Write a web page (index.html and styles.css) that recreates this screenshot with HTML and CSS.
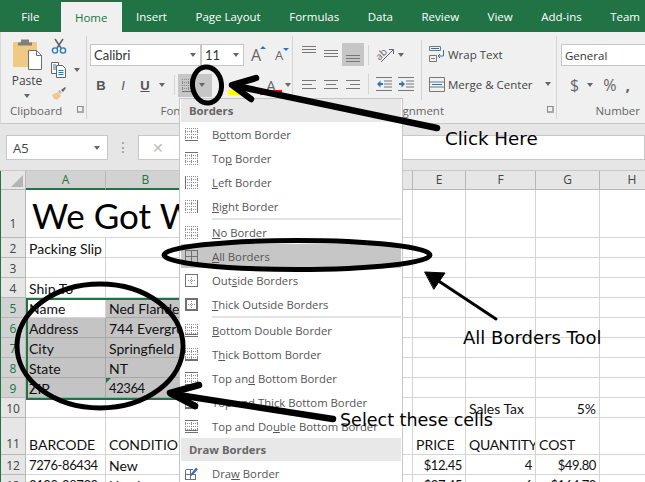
FILE: index.html
```html
<!DOCTYPE html>
<html lang="en">
<head>
    <meta charset="UTF-8">
    <title>Borders menu in Excel</title>
    <link rel="stylesheet" href="styles.css">
</head>
<body>
    <svg class="defs" width="0" height="0">
        <symbol id="dots" viewBox="0 0 13 13">
            <path class="dot" d="M.5 0v13M6.500 0v13M12.500 0v13M0 .5h13M0 3.500h13M0 6.500h13M0 9.500h13M0 12.500h13" />
        </symbol>
        <symbol id="cross" viewBox="0 0 13 13">
            <path class="dot" d="M6.500 3v7M3 6.500h7" />
        </symbol>
    </svg>

    <div class="window">
        <div class="tabs">
            <div class="tab">File</div>
            <div class="tab active">Home</div>
            <div class="tab">Insert</div>
            <div class="tab">Page Layout</div>
            <div class="tab">Formulas</div>
            <div class="tab">Data</div>
            <div class="tab">Review</div>
            <div class="tab">View</div>
            <div class="tab">Add-ins</div>
            <div class="tab">Team</div>
        </div>

        <div class="ribbon">
            <!-- clipboard -->
            <div class="group clipboard">
                <div class="group-body clip-body">
                    <div class="paste">
                        <svg width="30" height="32" viewBox="0 0 30 32">
                            <rect x="1" y="4" width="24" height="25" rx="1" fill="#f0c987" />
                            <path d="M9 1.500h8v3h3v3H6v-3h3z" fill="#7f7f7f" />
                            <path d="M16.500 12.500h8l5 5v14h-13z" fill="#fff" stroke="#6e6e6e" />
                            <path d="M24.500 12.500v5h5" fill="none" stroke="#6e6e6e" />
                        </svg>
                        <span class="paste-label">Paste</span>
                        <span class="caret"></span>
                    </div>
                    <div class="clip-tools">
                        <svg width="16" height="16" viewBox="0 0 16 16">
                            <path d="M4 1l6 9M12 1L6 10" stroke="#666" stroke-width="1.600" fill="none" />
                            <circle cx="4" cy="12.500" r="2.600" fill="none" stroke="#2e75b6" stroke-width="1.400" />
                            <circle cx="12" cy="12.500" r="2.600" fill="none" stroke="#2e75b6" stroke-width="1.400" />
                        </svg>
                        <div class="tool-row">
                            <svg width="16" height="16" viewBox="0 0 16 16">
                                <path d="M.5 .5h7v11h-7z" fill="#fff" stroke="#666" />
                                <path d="M5.500 3.500h6l3 3v9h-9z" fill="#fff" stroke="#666" />
                                <path d="M2 3h3M2 5h3M2 7h3M7.500 8.500h5M7.500 10.500h5M7.500 12.500h5" stroke="#2e75b6" />
                            </svg>
                            <span class="caret"></span>
                        </div>
                        <svg width="16" height="15" viewBox="0 0 16 15">
                            <path d="M1 9l6-3 3 4-4 4-2-1-1 0z" fill="#f0c987" />
                            <path d="M7 5l2-1 2 3-2 1z" fill="#bbb" />
                            <path d="M10 4l4-3 1 1-3 4z" fill="#666" />
                        </svg>
                    </div>
                </div>
                <div class="group-label">Clipboard<span class="launcher"></span></div>
            </div>

            <!-- font -->
            <div class="group font">
                <div class="group-body font-body">
                    <div class="tool-row">
                        <div class="combo font-name">Calibri<span class="caret"></span></div>
                        <div class="combo font-size">11<span class="caret"></span></div>
                        <span class="grow">A<i class="up"></i></span>
                        <span class="grow small">A<i class="down"></i></span>
                    </div>
                    <div class="tool-row second">
                        <span class="btn bold">B</span>
                        <span class="btn ital">I</span>
                        <span class="btn under">U</span>
                        <span class="caret"></span>
                        <span class="vsep"></span>
                        <span class="border-btn">
                            <svg class="bi" viewBox="0 0 13 13"><use href="#dots" /><path d="M0 12.500h13" /></svg>
                            <span class="caret"></span>
                        </span>
                        <span class="vsep"></span>
                        <span class="color-btn fill"></span>
                        <span class="color-btn text">A</span>
                        <span class="caret"></span>
                    </div>
                </div>
                <div class="group-label">Font</div>
            </div>

            <!-- alignment -->
            <div class="group align">
                <div class="group-body align-body">
                    <div class="align-col">
                        <div class="tool-row">
                            <span class="lines top"></span>
                            <span class="lines mid"></span>
                            <span class="lines bot on"></span>
                            <span class="vsep"></span>
                            <svg class="orient" width="20" height="18" viewBox="0 0 20 18">
                                <text x="0" y="12" transform="rotate(-45 5 9)">ab</text>
                                <path d="M5 16L17 4M13 3.500h4.500V8" fill="none" stroke="#666" />
                            </svg>
                            <span class="caret"></span>
                        </div>
                        <div class="tool-row">
                            <span class="lines left"></span>
                            <span class="lines center"></span>
                            <span class="lines right"></span>
                            <span class="vsep"></span>
                            <svg width="16" height="14" viewBox="0 0 16 14">
                                <path d="M0 .5h16M8 4h8M8 7h8M8 10h8M0 13.500h16" stroke="#777" />
                                <path d="M1 7l3.500-3.500V6H7v2H4.500v2.500z" fill="#2e75b6" />
                            </svg>
                            <svg width="16" height="14" viewBox="0 0 16 14">
                                <path d="M0 .5h16M8 4h8M8 7h8M8 10h8M0 13.500h16" stroke="#777" />
                                <path d="M7 7L3.500 3.500V6H1v2h2.500v2.500z" fill="#2e75b6" />
                            </svg>
                        </div>
                    </div>
                    <span class="vsep tall"></span>
                    <div class="merge-col">
                        <div class="tool-row">
                            <svg width="16" height="16" viewBox="0 0 16 16">
                                <path d="M.5 .5h11v4H.5zM.5 9.500h7v6h-7zM2 12.500h4" fill="none" stroke="#777" />
                                <path d="M2 2.500h8" stroke="#2e75b6" />
                                <path d="M14.500 4v6H9M11 8l-2 2 2 2" fill="none" stroke="#2e75b6" />
                            </svg>
                            <span>Wrap Text</span>
                        </div>
                        <div class="tool-row">
                            <svg width="16" height="15" viewBox="0 0 16 15">
                                <path d="M.5.5h15v14H.5zM.5 5h15M.5 10h15" fill="none" stroke="#777" />
                                <path d="M3 7.500h10" stroke="#2e75b6" />
                            </svg>
                            <span>Merge &amp; Center</span>
                            <span class="caret wide"></span>
                        </div>
                    </div>
                </div>
                <div class="group-label">Alignment<span class="launcher"></span></div>
            </div>

            <!-- number -->
            <div class="group number">
                <div class="group-body number-body">
                    <div class="combo general">General</div>
                    <div class="tool-row money">
                        <span class="sym">$</span>
                        <span class="caret"></span>
                        <span class="sym">%</span>
                        <span class="sym comma">,</span>
                    </div>
                </div>
                <div class="group-label">Number</div>
            </div>
        </div>

        <div class="formula-bar">
            <div class="name-box">A5<span class="caret"></span></div>
            <div class="grip"></div>
            <div class="fx-box">✕</div>
            <div class="fx-input"></div>
        </div>

        <div class="sheet">
            <table class="grid">
                <colgroup>
                    <col class="c-head"><col class="c-a"><col class="c-b"><col class="c-c"><col class="c-d"><col class="c-e"><col class="c-f"><col class="c-g"><col class="c-h">
                </colgroup>
                <tr class="r-head">
                    <th class="corner"><span></span></th><th class="hit">A</th><th class="hit">B</th><th>C</th><th>D</th><th>E</th><th>F</th><th>G</th><th>H</th>
                </tr>
                <tr class="r-title">
                    <th>1</th><td class="title" colspan="4">We Got Widgets</td><td></td><td></td><td></td><td></td>
                </tr>
                <tr><th>2</th><td>Packing Slip</td><td></td><td></td><td></td><td></td><td></td><td></td><td></td></tr>
                <tr><th>3</th><td></td><td></td><td></td><td></td><td></td><td></td><td></td><td></td></tr>
                <tr><th>4</th><td>Ship To</td><td></td><td></td><td></td><td></td><td></td><td></td><td></td></tr>
                <tr><th class="hit">5</th><td>Name</td><td class="sel">Ned Flanders</td><td></td><td></td><td></td><td></td><td></td><td></td></tr>
                <tr><th class="hit">6</th><td class="sel">Address</td><td class="sel">744 Evergreen</td><td></td><td></td><td></td><td></td><td></td><td></td></tr>
                <tr><th class="hit">7</th><td class="sel">City</td><td class="sel">Springfield</td><td></td><td></td><td></td><td></td><td></td><td></td></tr>
                <tr><th class="hit">8</th><td class="sel">State</td><td class="sel">NT</td><td></td><td></td><td></td><td></td><td></td><td></td></tr>
                <tr><th class="hit">9</th><td class="sel">ZIP</td><td class="sel flag code">42364</td><td></td><td></td><td></td><td></td><td></td><td></td></tr>
                <tr><th>10</th><td></td><td></td><td></td><td></td><td></td><td>Sales Tax</td><td class="num">5%</td><td></td></tr>
                <tr class="r-tall"><th>11</th><td>BARCODE</td><td>CONDITION</td><td></td><td></td><td>PRICE</td><td class="tight">QUANTITY</td><td>COST</td><td></td></tr>
                <tr><th>12</th><td class="code">7276-86434</td><td>New</td><td></td><td></td><td class="num code">$12.45</td><td class="num code">4</td><td class="num code">$49.80</td><td></td></tr>
                <tr><th>13</th><td class="code">3109-28730</td><td>Used</td><td></td><td></td><td class="num code">$27.45</td><td class="num code">6</td><td class="num code">$164.70</td><td></td></tr>
            </table>
            <div class="selection"></div>
        </div>

        <div class="menu">
            <div class="menu-head">Borders</div>
            <div class="item"><svg class="bi" viewBox="0 0 13 13"><use href="#dots" /><path d="M0 12.500h13" /></svg><span>B<u>o</u>ttom Border</span></div>
            <div class="item"><svg class="bi" viewBox="0 0 13 13"><use href="#dots" /><path d="M0 .5h13" /></svg><span>To<u>p</u> Border</span></div>
            <div class="item"><svg class="bi" viewBox="0 0 13 13"><use href="#dots" /><path d="M.5 0v13" /></svg><span><u>L</u>eft Border</span></div>
            <div class="item"><svg class="bi" viewBox="0 0 13 13"><use href="#dots" /><path d="M12.500 0v13" /></svg><span><u>R</u>ight Border</span></div>
            <div class="menu-sep"></div>
            <div class="item"><svg class="bi" viewBox="0 0 13 13"><use href="#dots" /></svg><span><u>N</u>o Border</span></div>
            <div class="item picked"><svg class="bi" viewBox="0 0 13 13"><path d="M.5.5h12v12H.5zM6.500 0v13M0 6.500h13" /></svg><span><u>A</u>ll Borders</span></div>
            <div class="item"><svg class="bi" viewBox="0 0 13 13"><use href="#cross" /><path d="M.5.5h12v12H.5z" /></svg><span>Out<u>s</u>ide Borders</span></div>
            <div class="item"><svg class="bi" viewBox="0 0 13 13"><use href="#cross" /><path class="thick" d="M1 1h11v11H1z" /></svg><span><u>T</u>hick Outside Borders</span></div>
            <div class="menu-sep"></div>
            <div class="item"><svg class="bi" viewBox="0 0 13 13"><use href="#dots" /><path d="M0 10.500h13M0 12.500h13" /></svg><span><u>B</u>ottom Double Border</span></div>
            <div class="item"><svg class="bi" viewBox="0 0 13 13"><use href="#dots" /><path class="thick" d="M0 12h13" /></svg><span>T<u>h</u>ick Bottom Border</span></div>
            <div class="item"><svg class="bi" viewBox="0 0 13 13"><use href="#dots" /><path d="M0 .5h13M0 12.500h13" /></svg><span>Top an<u>d</u> Bottom Border</span></div>
            <div class="item"><svg class="bi" viewBox="0 0 13 13"><use href="#dots" /><path d="M0 .5h13" /><path class="thick" d="M0 12h13" /></svg><span>Top and Thic<u>k</u> Bottom Border</span></div>
            <div class="item"><svg class="bi" viewBox="0 0 13 13"><use href="#dots" /><path d="M0 .5h13M0 10.500h13M0 12.500h13" /></svg><span>Top and Do<u>u</u>ble Bottom Border</span></div>
            <div class="menu-head">Draw Borders</div>
            <div class="item"><svg class="bi" viewBox="0 0 13 13"><path d="M.5 2.500h7M.5 2.500v10h10V7M.5 7.500h10M5.500 2.500v10" /><path class="pen" d="M5 8l6-7.500 2 2L6.500 9z" /></svg><span>Dra<u>w</u> Border</span></div>
        </div>

        <!-- hand drawn marks on top of the screenshot -->
        <svg class="marks" width="645" height="482" viewBox="0 0 645 482">
            <ellipse cx="207" cy="85" rx="14.500" ry="18" stroke-width="5" transform="rotate(-6 207 85)" />
            <path d="M437 128L236 86" stroke-width="6.500" />
            <path d="M256 78L232 85L251 99" stroke-width="6.500" />
            <ellipse cx="297" cy="255" rx="133" ry="14.500" stroke-width="5" />
            <path d="M496 319L428 274" stroke-width="3" />
            <path d="M425 272L445 273L434 289z" class="solid" stroke-width="1" />
            <ellipse cx="100" cy="346" rx="83" ry="62" stroke-width="5" />
            <path d="M333 419L172 394" stroke-width="6.500" />
            <path d="M199 385L170 393L195 406" stroke-width="6.500" />
        </svg>
        <div class="note click">Click Here</div>
        <div class="note tool">All Borders Tool</div>
        <div class="note cells">Select these cells</div>
    </div>
</body>
</html>
```

FILE: styles.css
```css
* {
    box-sizing: border-box;
}

html,
body {
    margin: 0;
    padding: 0;
    overflow: hidden;
}

.defs {
    position: absolute;
}

.window {
    position: relative;
    width: 645px;
    height: 482px;
    overflow: hidden;
    background-color: #fff;
    font-family: "Open Sans", sans-serif;
    font-size: 12px;
    color: #444;
}

/* tabs */
.tabs {
    display: flex;
    height: 32px;
    padding-left: 7px;
    background-color: #217346;
    color: #fff;
    font-size: 11.5px;
}

.tab {
    display: flex;
    align-items: center;
    padding: 0 14.25px;
    white-space: nowrap;
}

.tab:first-child {
    margin-right: 7px;
}

.tab.active {
    margin-top: 2px;
    background-color: #f0f0f0;
    color: #217346;
}

/* ribbon */
.ribbon {
    display: flex;
    height: 92px;
    background-color: #f0f0f0;
    border-bottom: 1px solid #c8c8c8;
    border-left: 1px solid #d8d8d8;
}

.group {
    display: flex;
    flex-direction: column;
    margin-top: 4px;
    height: 83px;
    border-right: 1px solid #d4d4d4;
    flex: none;
}

.group-body {
    flex: 1;
    display: flex;
}

.group-label {
    position: relative;
    height: 16px;
    line-height: 15px;
    text-align: center;
    font-size: 11.5px;
    color: #666;
}

.clipboard {
    width: 86px;
}

.clipboard .group-label {
    text-align: left;
    padding-left: 9px;
}

.launcher {
    position: absolute;
    right: 2px;
    top: 3px;
    width: 7px;
    height: 7px;
    border-left: 1px solid #888;
    border-top: 1px solid #888;
    border-right: 2px solid #aaa;
    border-bottom: 2px solid #aaa;
}

.font {
    width: 206px;
}

.font .group-label {
    padding-right: 34px;
}

.align {
    width: 264px;
}

.align .group-label {
    text-align: right;
    padding-right: 112px;
}

.number {
    flex: 1;
    border-right: 0;
}

.number .group-label {
    text-align: right;
    padding-right: 11px;
}

.caret {
    display: inline-block;
    flex: none;
    width: 0;
    height: 0;
    border-left: 3.5px solid transparent;
    border-right: 3.5px solid transparent;
    border-top: 4px solid #666;
}

.tool-row {
    display: flex;
    align-items: center;
}

.vsep {
    flex: none;
    width: 1px;
    height: 20px;
    background-color: #d4d4d4;
}

.vsep.tall {
    height: 60px;
    margin-top: 4px;
}

/* clipboard group */
.paste {
    display: flex;
    flex-direction: column;
    align-items: center;
    width: 34px;
    margin: 2px 0 0 9px;
    font-size: 12px;
    color: #444;
}

.paste-label {
    margin-top: 2px;
    line-height: 18px;
}

.paste .caret {
    margin-top: 4px;
}

.clip-tools {
    display: flex;
    flex-direction: column;
    gap: 8px;
    margin: 2px 0 0 7px;
}

.clip-tools .caret {
    margin-left: 7px;
}

/* font group */
.font-body {
    flex-direction: column;
    padding: 8px 0 0 3px;
}

.combo {
    display: flex;
    align-items: center;
    justify-content: space-between;
    height: 22px;
    padding: 0 4px 0 3px;
    background-color: #fff;
    border: 1px solid #c6c6c6;
    font-size: 12px;
    color: #333;
}

.font-name {
    width: 111px;
    font-family: Lato, sans-serif;
    font-size: 13px;
}

.font-size {
    width: 43px;
    font-family: Lato, sans-serif;
    font-size: 13px;
}

.grow {
    position: relative;
    width: 22px;
    margin-left: 1px;
    text-align: center;
    font-size: 16px;
    color: #666;
}

.grow.small {
    font-size: 13px;
}

.grow i {
    position: absolute;
    top: 2px;
    right: 1px;
    border-left: 3px solid transparent;
    border-right: 3px solid transparent;
}

.grow .up {
    border-bottom: 3px solid #2e75b6;
}

.grow .down {
    border-top: 3px solid #2e75b6;
}

.second {
    height: 22px;
    margin-top: 8px;
}

.btn {
    width: 22px;
    text-align: center;
    font-family: "Liberation Sans", sans-serif;
    font-size: 13px;
    color: #555;
}

.bold {
    font-weight: bold;
}

.ital {
    font-style: italic;
}

.under {
    font-weight: bold;
    text-decoration: underline;
}

.second > .caret {
    margin-left: 3px;
}

.second > .vsep {
    margin: 0 3px 0 9px;
}

.border-btn {
    display: flex;
    align-items: center;
    justify-content: space-between;
    width: 34px;
    height: 23px;
    padding: 0 7px 0 4px;
    background-color: #c6c6c6;
}

.color-btn {
    height: 20px;
}

.color-btn.fill {
    width: 18px;
    margin-left: 3px;
    background: linear-gradient(#f0f0f0 15px, #ffff00 15px);
}

.color-btn.text {
    width: 22px;
    margin-left: 14px;
    text-align: center;
    font-size: 15px;
    line-height: 20px;
    color: #666;
    background: linear-gradient(#f0f0f0 15px, #ff0000 15px);
}

/* alignment group */
.align-col {
    width: 128px;
    padding: 7px 0 0 5px;
}

.align-col .tool-row {
    height: 23px;
    margin-bottom: 6px;
}

.align-col .vsep {
    margin: 0 7px 0 4px;
}

.align-col svg + svg {
    margin-left: 6px;
}

.align-col .caret {
    margin-left: 2px;
}

.orient text {
    font-size: 10px;
    fill: #666;
}

.lines {
    flex: none;
    width: 22px;
    height: 23px;
    background-repeat: no-repeat;
    background-image:
        linear-gradient(#777, #777),
        linear-gradient(#777, #777),
        linear-gradient(#777, #777);
    background-size: 14px 1px, 14px 1px, 14px 1px;
}

.lines.top {
    background-position: 4px 3px, 4px 6px, 4px 9px;
}

.lines.mid {
    background-position: 4px 7px, 4px 10px, 4px 13px;
}

.lines.bot {
    background-position: 4px 12px, 4px 15px, 4px 18px;
}

.lines.bot.on {
    background-color: #c6c6c6;
}

.lines.left {
    background-size: 14px 1px, 10px 1px, 14px 1px;
    background-position: 4px 8px, 4px 12px, 4px 16px;
}

.lines.center {
    background-size: 14px 1px, 10px 1px, 14px 1px;
    background-position: 4px 8px, 6px 12px, 4px 16px;
}

.lines.right {
    background-size: 14px 1px, 10px 1px, 14px 1px;
    background-position: 4px 8px, 8px 12px, 4px 16px;
}

.merge-col {
    padding: 7px 0 0 7px;
    font-size: 11.5px;
    color: #444;
}

.merge-col .tool-row {
    height: 22px;
    margin-bottom: 8px;
    gap: 3px;
}

.caret.wide {
    margin-left: 9px;
}

/* number group */
.number-body {
    flex-direction: column;
    padding: 8px 0 0 4px;
}

.general {
    width: 90px;
    font-size: 11.5px;
}

.money {
    height: 22px;
    margin-top: 8px;
    padding-left: 9px;
    font-size: 16px;
    color: #666;
}

.money .caret {
    margin: 0 10px 0 8px;
}

.comma {
    margin-left: 9px;
    font-weight: bold;
}

/* formula bar */
.formula-bar {
    display: flex;
    height: 47px;
    padding: 11px 0 10px 6px;
    background-color: #e6e6e6;
    border-bottom: 1px solid #c8c8c8;
}

.name-box {
    display: flex;
    align-items: center;
    justify-content: space-between;
    width: 102px;
    padding: 0 7px 0 6px;
    background-color: #fff;
    border: 1px solid #c8c8c8;
    font-size: 13px;
    color: #444;
}

.grip {
    width: 2px;
    margin: 7px 14px;
    border-left: 2px dotted #aaa;
}

.fx-box {
    width: 50px;
    padding-left: 13px;
    line-height: 24px;
    background-color: #fff;
    border: 1px solid #c8c8c8;
    border-right: 0;
    font-size: 14px;
    color: #bbb;
}

.fx-input {
    flex: 1;
    background-color: #fff;
    border: 1px solid #c8c8c8;
    border-left: 0;
}

/* sheet */
.sheet {
    position: relative;
    border-left: 1px solid #217346;
}

.grid {
    table-layout: fixed;
    width: 664px;
    border-collapse: separate;
    border-spacing: 0;
    font-family: Lato, sans-serif;
    font-size: 14px;
    color: #111;
}

.c-head { width: 25px; }
.c-a { width: 80px; }
.c-b { width: 80px; }
.c-c { width: 114px; }
.c-d { width: 113px; }
.c-e { width: 53px; }
.c-f { width: 70px; }
.c-g { width: 64px; }
.c-h { width: 65px; }

.grid tr {
    height: 20px;
}

.grid th {
    padding: 2px 0 0;
    background-color: #e6e6e6;
    border-right: 1px solid #b8b8b8;
    border-bottom: 1px solid #b8b8b8;
    font-family: "Open Sans", sans-serif;
    font-size: 12px;
    font-weight: normal;
    line-height: 16px;
    color: #444;
}

.grid .r-head {
    height: 19px;
}

.r-head th {
    padding: 0;
}

.grid th.hit {
    background-color: #d2d2d2;
    color: #217346;
}

.r-head th.hit {
    border-bottom: 2px solid #217346;
}

.corner span {
    display: block;
    width: 0;
    height: 0;
    margin: 2px 2px 0 auto;
    border-left: 12px solid transparent;
    border-bottom: 12px solid #b4b4b4;
}

.grid td {
    padding: 2px 3px 0;
    border-right: 1px solid #d4d4d4;
    border-bottom: 1px solid #d4d4d4;
    white-space: nowrap;
    overflow: hidden;
    line-height: 17px;
}

.grid .r-title {
    height: 48px;
}

.grid .r-title th {
    vertical-align: bottom;
    padding: 0;
    line-height: 26px;
}

.grid td.title {
    padding: 4px 0 0 6px;
    font-size: 35px;
    line-height: 43px;
    color: #000;
}

.grid .r-tall {
    height: 37px;
}

.r-tall th {
    vertical-align: bottom;
    padding: 0;
    line-height: 20px;
}

.grid .r-tall td {
    vertical-align: bottom;
    padding-top: 0;
    line-height: 18px;
}

.grid td.sel {
    background-color: #c4c4c4;
    border-color: #a8a8a8;
}

.grid td.num {
    text-align: right;
}

.grid td.code {
    font-size: 13px;
    letter-spacing: -0.4px;
}

.grid td.tight {
    padding-right: 0;
    letter-spacing: -0.3px;
}

.flag {
    position: relative;
}

.flag::before {
    content: "";
    position: absolute;
    left: 0;
    top: 0;
    border-top: 5px solid #107c41;
    border-right: 5px solid transparent;
}

.selection {
    position: absolute;
    left: 25px;
    top: 127px;
    width: 162px;
    height: 102px;
    border: 2px solid #217346;
    pointer-events: none;
}

/* borders menu */
.menu {
    position: absolute;
    left: 179px;
    top: 98px;
    width: 224px;
    height: 400px;
    padding: 0 1px;
    background-color: #fff;
    border: 1px solid #c6c6c6;
    font-size: 11.3px;
    color: #555;
}

.menu-head {
    height: 23px;
    padding-left: 8px;
    background-color: #e8e8e8;
    font-weight: bold;
    line-height: 23px;
    color: #666;
}

.item {
    display: flex;
    align-items: center;
    gap: 14px;
    height: 24px;
    padding-left: 4px;
    white-space: nowrap;
}

.item.picked {
    background-color: #c6c6c6;
}

.menu-sep {
    height: 2px;
    margin-left: 31px;
    background-color: #e2e2e2;
}

.bi {
    flex: none;
    width: 13px;
    height: 13px;
    fill: none;
    stroke: #707070;
    stroke-width: 1;
    shape-rendering: crispEdges;
}

.dot {
    stroke: #8c8c8c;
    stroke-width: 1;
    stroke-dasharray: 1 1;
    fill: none;
}

.bi .thick {
    stroke-width: 2;
}

.bi .pen {
    fill: #2e75b6;
    stroke: none;
    shape-rendering: auto;
}

/* annotations */
.marks {
    position: absolute;
    left: 0;
    top: 0;
    fill: none;
    stroke: #000;
    stroke-linecap: round;
    stroke-linejoin: round;
}

.marks .solid {
    fill: #000;
}

.note {
    position: absolute;
    font-family: "DejaVu Sans", sans-serif;
    font-size: 18px;
    line-height: 20px;
    color: #000;
    white-space: nowrap;
}

.note.click {
    left: 445px;
    top: 129px;
    font-size: 18.3px;
}

.note.tool {
    left: 463px;
    top: 328px;
}

.note.cells {
    left: 340px;
    top: 410px;
    font-size: 17.5px;
}
```
